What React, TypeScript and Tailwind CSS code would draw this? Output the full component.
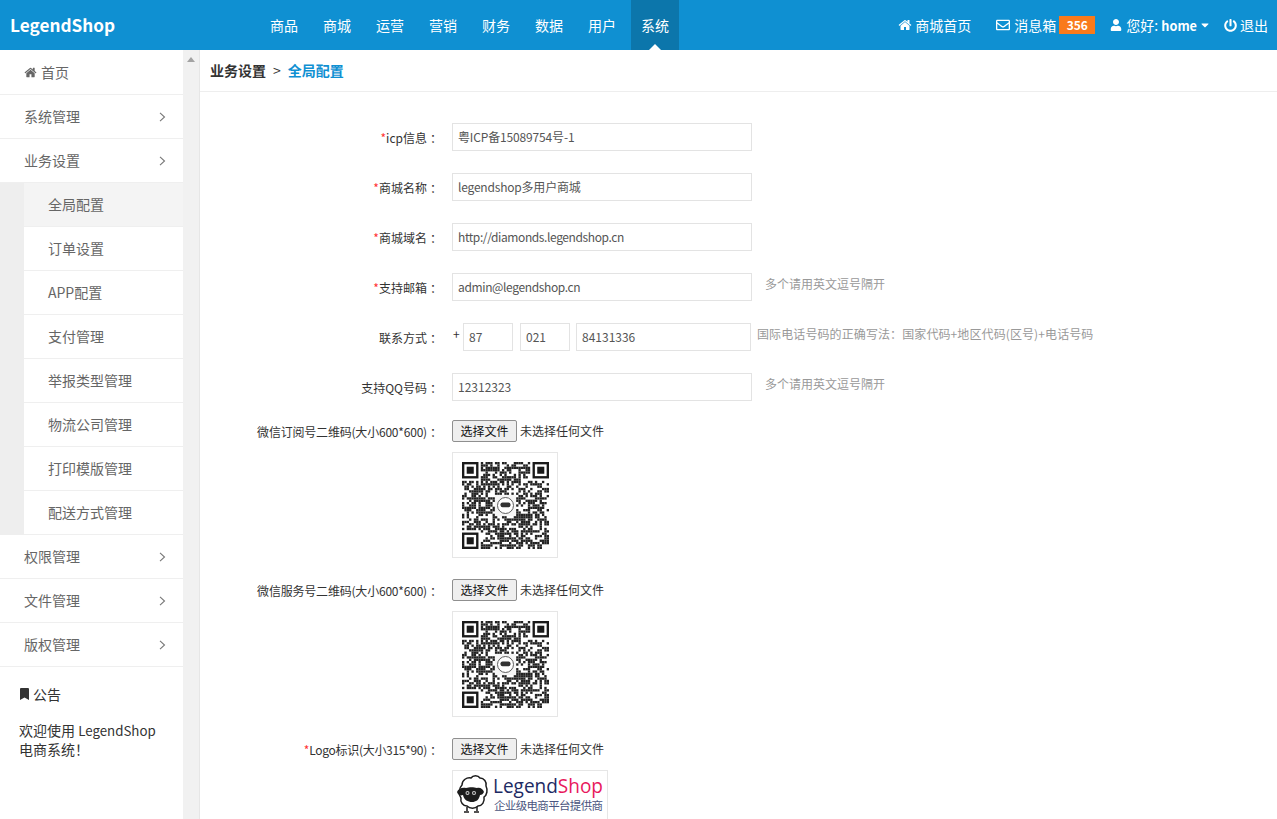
import React from "react";
import { FaBookmark, FaCaretDown, FaPowerOff, FaRegEnvelope, FaUser } from "react-icons/fa";

const HomeIcon = ({ className }: { className?: string }) => (
  <svg viewBox="0 0 1792 1792" fill="currentColor" className={className}>
    <path d="M1472 992v480q0 26-19 45t-45 19h-384v-384h-256v384h-384q-26 0-45-19t-19-45v-480q0-1 .5-3t.5-3l575-474 575 474q1 2 1 6zm223-69l-62 74q-8 9-21 11h-3q-13 0-21-7l-692-577-692 577q-12 8-24 7-13-2-21-11l-62-74q-8-10-7-23.5t11-21.5l719-599q32-26 76-26t76 26l244 204v-195q0-14 9-23t23-9h192q14 0 23 9t9 23v408l219 182q10 8 11 21.5t-7 23.5z" />
  </svg>
);

const Chevron = () => (
  <svg width="7" height="10" viewBox="0 0 7 10" fill="none" stroke="#777" strokeWidth="1.1" className="shrink-0">
    <path d="M1 0.8 L5.5 5 L1 9.2" />
  </svg>
);

const nav = ["商品", "商城", "运营", "营销", "财务", "数据", "用户", "系统"];
const subs = ["全局配置", "订单设置", "APP配置", "支付管理", "举报类型管理", "物流公司管理", "打印模版管理", "配送方式管理"];

const N = 37;
function qrCells() {
  const cells: [number, number][] = [];
  let s = 7919;
  const reserved = (x: number, y: number) =>
    (x < 8 && y < 8) || (x >= N - 8 && y < 8) || (x < 8 && y >= N - 8) || (x >= 14 && x <= 22 && y >= 14 && y <= 22);
  for (let y = 0; y < N; y++) {
    for (let x = 0; x < N; x++) {
      s = (s * 1103515245 + 12345) & 0x7fffffff;
      if (reserved(x, y)) continue;
      if ((s >> 16) % 100 < 54) cells.push([x, y]);
    }
  }
  return cells;
}
const cells = qrCells();

const Finder = ({ x, y }: { x: number; y: number }) => (
  <g>
    <rect x={x + 0.5} y={y + 0.5} width="6" height="6" fill="none" stroke="#1a1a1a" strokeWidth="1" />
    <rect x={x + 2} y={y + 2} width="3" height="3" fill="#1a1a1a" />
  </g>
);

const QrPicture = () => (
  <div className="w-[106px] h-[106px] border border-[#e6e6e6] bg-white flex items-center justify-center">
    <svg width="87" height="87" viewBox="0 0 37 37" className="block">
      {cells.map(([x, y]) => (
        <rect key={`${x}-${y}`} x={x} y={y} width="1" height="1" fill="#222" />
      ))}
      <Finder x={0} y={0} />
      <Finder x={30} y={0} />
      <Finder x={0} y={30} />
      <rect x="14" y="14" width="9" height="9" fill="#f5f5f5" />
      <circle cx="18.5" cy="18.5" r="3.4" fill="#fff" stroke="#555" strokeWidth="0.4" />
      <rect x="16.4" y="17.2" width="4.2" height="2" rx="0.8" fill="#333" />
    </svg>
  </div>
);

const LogoPicture = () => (
  <div className="w-[156px] h-[50px] border border-[#e6e6e6] bg-white flex items-center">
    <svg width="154" height="48" viewBox="0 0 154 48" className="block">
      <path d="M9 14c0-5 5-8 9-7 2-3 7-3 9 0 4 0 7 4 6 8 2 4 1 9-2 11 1 5-2 9-6 9-3 3-8 3-11 0-4 0-7-4-6-8-3-4-2-10 1-13z" fill="#fff" stroke="#1c1c1c" strokeWidth="1.5" />
      <path d="M4 21c1-3 5-5 9-4 3-1 8-1 11 0 3-1 6 1 7 4-1 2-2 3-4 3-1 5-4 7-8 7s-8-2-9-7c-3 1-5 0-6-3z" fill="#1c1c1c" />
      <circle cx="14.5" cy="22" r="2" fill="#ccc" />
      <circle cx="21" cy="22" r="2" fill="#ccc" />
      <circle cx="14.5" cy="22" r="1" fill="#222" />
      <circle cx="21" cy="22" r="1" fill="#222" />
      <path d="M14 36v4M24 36v4M11 41h5M21 41h5" stroke="#1c1c1c" strokeWidth="1.5" fill="none" />
      <text x="40" y="22" fontSize="20" fontFamily="'Open Sans',sans-serif" textLength="110" lengthAdjust="spacingAndGlyphs">
        <tspan fill="#1d2a63">Legend</tspan>
        <tspan fill="#e8175d">Shop</tspan>
      </text>
      <text x="41" y="39" fontSize="11.5" fontFamily="'Noto Sans CJK SC',sans-serif" fill="#4a5580" textLength="109">企业级电商平台提供商</text>
    </svg>
  </div>
);

const Label = ({ star, children, top, track = "" }: { star?: boolean; children: React.ReactNode; top?: boolean; track?: string }) => (
  <div className={`w-[252px] shrink-0 pr-[10px] pt-[1px] text-right text-[12px] text-[#333] whitespace-nowrap ${top ? "leading-[22px]" : "leading-[28px]"}`}>
    {star && <span className="text-[#f33]">*</span>}
    <span className={track}>{children}</span>
    <span className="ml-[3px]">：</span>
  </div>
);

const Field = ({ value, className }: { value: string; className: string }) => (
  <input
    readOnly
    value={value}
    className={`h-[28px] border border-[#e3e3e3] bg-white px-[5px] pb-[2px] text-[12px] text-[#555] outline-none ${className}`}
  />
);

const Row = ({ star, label, value, hint, track = "" }: { star?: boolean; label: string; value: string; hint?: string; track?: string }) => (
  <div className="flex items-start h-[50px]">
    <Label star={star}>{label}</Label>
    <Field value={value} className={`w-[300px] ${track}`} />
    {hint && <span className="ml-[13px] text-[12px] leading-[22px] text-[#999]">{hint}</span>}
  </div>
);

const FileRow = ({ star, label, children, gap, track }: { star?: boolean; label: string; children: React.ReactNode; gap: string; track: string }) => (
  <div className={`flex items-start ${gap}`}>
    <Label star={star} top track={track}>{label}</Label>
    <div className="flex flex-col items-start gap-[10px]">
      <div className="flex items-center gap-[3px] h-[22px]">
        <button className="w-[65px] h-[22px] border border-[#8f8f8f] rounded-[2px] bg-[#efefef] text-[12px] text-[#111] leading-none">选择文件</button>
        <span className="text-[12px] text-[#333]">未选择任何文件</span>
      </div>
      {children}
    </div>
  </div>
);

export default function App() {
  return (
    <div className="h-[819px] overflow-hidden flex flex-col bg-white text-[#333] font-['Noto_Sans_CJK_SC','Noto_Sans',sans-serif]">
      <header className="h-[50px] shrink-0 bg-[#0f90d2] text-white flex items-center text-[14px]">
        <div className="w-[260px] pl-[10px] text-[17.2px] font-bold leading-[50px]">LegendShop</div>
        <nav className="flex gap-[5px]">
          {nav.map((n, i) => (
            <div
              key={n}
              className={`relative w-[48px] h-[50px] text-center leading-[50px] ${i === 7 ? "bg-[#0c76ab]" : ""}`}
            >
              {n}
              {i === 7 && (
                <span className="absolute left-[18px] bottom-0 w-0 h-0 border-l-[6px] border-r-[6px] border-b-[6px] border-l-transparent border-r-transparent border-b-white" />
              )}
            </div>
          ))}
        </nav>
        <div className="flex-1" />
        <div className="flex items-center pr-[9px]">
          <HomeIcon className="w-[14px] h-[14px] mr-[3px]" />
          <span>商城首页</span>
          <FaRegEnvelope className="ml-[25px] mr-[4px] w-[14px] h-[14px]" />
          <span>消息箱</span>
          <span className="ml-[3px] w-[36px] h-[18px] bg-[#f97a1b] text-center text-[12px] font-bold leading-[18px]">356</span>
          <FaUser className="ml-[15px] mr-[4px] w-[12px] h-[12px]" />
          <span>您好: <b className="font-bold text-[12.7px]">home</b></span>
          <FaCaretDown className="ml-[3px] w-[10px] h-[12px]" />
          <FaPowerOff className="ml-[14px] mr-[3px] w-[13px] h-[13px]" />
          <span>退出</span>
        </div>
      </header>
      <div className="flex-1 flex min-h-0">
        <aside className="w-[183px] shrink-0 bg-white text-[14px] text-[#666]">
          <div className="h-[45px] pl-[24px] flex items-center gap-[4px] border-b border-[#efefef]">
            <HomeIcon className="w-[13px] h-[13px]" />
            <span>首页</span>
          </div>
          {["系统管理", "业务设置"].map((t) => (
            <div key={t} className="h-[44px] pl-[24px] pr-[17px] flex items-center justify-between border-b border-[#efefef]">
              <span>{t}</span>
              <Chevron />
            </div>
          ))}
          <div className="pl-[24px] bg-[#eeeeee]">
            {subs.map((t, i) => (
              <div
                key={t}
                className={`h-[44px] pl-[24px] flex items-center border-b border-[#efefef] ${i === 0 ? "bg-[#f4f4f4]" : "bg-white"}`}
              >
                {t}
              </div>
            ))}
          </div>
          {["权限管理", "文件管理", "版权管理"].map((t) => (
            <div key={t} className="h-[44px] pl-[24px] pr-[17px] flex items-center justify-between border-b border-[#efefef]">
              <span>{t}</span>
              <Chevron />
            </div>
          ))}
          <div className="pl-[19px] pr-[24px] pt-[17px] text-[#333]">
            <div className="flex items-center gap-[3px] h-[20px]">
              <FaBookmark className="w-[11px] h-[12px]" />
              <span>公告</span>
            </div>
            <p className="mt-[17px] leading-[19px]">欢迎使用 <span className="text-[13.3px]">LegendShop</span> 电商系统！</p>
          </div>
        </aside>
        <div className="w-[17px] shrink-0 bg-[#f1f1f1] border-r border-[#e6e6e6] flex justify-center pt-[7px]">
          <span className="w-0 h-0 border-l-[4px] border-r-[4px] border-b-[5px] border-l-transparent border-r-transparent border-b-[#a3a3a3]" />
        </div>
        <main className="flex-1 min-w-0">
          <div className="h-[42px] pl-[10px] flex items-center border-b border-[#eeeeee] text-[14px] font-bold">
            <span className="text-[#333]">业务设置</span>
            <span className="mx-[7px] font-normal text-[#333]">&gt;</span>
            <span className="text-[#0f90d2]">全局配置</span>
          </div>
          <div className="pt-[31px]">
            <Row star label="icp信息" value="粤ICP备15089754号-1" track="tracking-[-0.15px]" />
            <Row star label="商城名称" value="legendshop多用户商城" track="tracking-[-0.2px]" />
            <Row star label="商城域名" value="http://diamonds.legendshop.cn" track="tracking-[-0.4px]" />
            <Row star label="支持邮箱" value="admin@legendshop.cn" hint="多个请用英文逗号隔开" track="tracking-[-0.37px]" />
            <div className="flex items-start h-[50px]">
              <Label>联系方式</Label>
              <span className="w-[11px] text-[12px] leading-[22px] text-[#333] pl-[1px]">+</span>
              <Field value="87" className="w-[50px]" />
              <Field value="021" className="w-[50px] ml-[7px]" />
              <Field value="84131336" className="w-[175px] ml-[6px]" />
              <span className="ml-[6px] text-[12px] leading-[22px] text-[#999] tracking-[0.1px]">国际电话号码的正确写法：国家代码+地区代码(区号)+电话号码</span>
            </div>
            <div className="h-[47px]">
              <Row label="支持QQ号码" value="12312323" hint="多个请用英文逗号隔开" />
            </div>
            <FileRow label="微信订阅号二维码(大小600*600)" gap="mb-[21px]" track="tracking-[-0.2px]">
              <QrPicture />
            </FileRow>
            <FileRow label="微信服务号二维码(大小600*600)" gap="mb-[21px]" track="tracking-[-0.2px]">
              <QrPicture />
            </FileRow>
            <FileRow star label="Logo标识(大小315*90)" gap="" track="tracking-[-0.3px]">
              <LogoPicture />
            </FileRow>
          </div>
        </main>
      </div>
    </div>
  );
}
